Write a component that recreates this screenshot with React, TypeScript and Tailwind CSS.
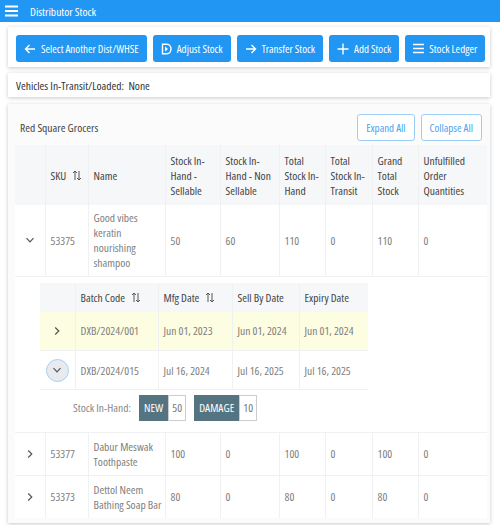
import React from "react";

const rows = [
  { sku: "53377", name: "Dabur Meswak Toothpaste", s: "100", ns: "0", tih: "100", tit: "0", g: "100", u: "0" },
  { sku: "53373", name: "Dettol Neem Bathing Soap Bar", s: "80", ns: "0", tih: "80", tit: "0", g: "80", u: "0" },
];

function SortIcon() {
  return (
    <svg width="10" height="11" viewBox="0 0 10 11" className="inline-block ml-[6px] -mt-[2px] text-[#555]">
      <path d="M3 10V1M1 3l2-2 2 2" stroke="currentColor" strokeWidth="1" fill="none" />
      <path d="M7 1v9M5 8l2 2 2-2" stroke="currentColor" strokeWidth="1" fill="none" />
    </svg>
  );
}

function Chevron({ dir }: { dir: "down" | "right" }) {
  return (
    <svg width="10" height="10" viewBox="0 0 10 10" className="text-[#555]">
      {dir === "down" ? (
        <path d="M1.5 3.2L5 6.8l3.5-3.6" stroke="currentColor" strokeWidth="1.2" fill="none" />
      ) : (
        <path d="M3.2 1.5L6.8 5 3.2 8.5" stroke="currentColor" strokeWidth="1.2" fill="none" />
      )}
    </svg>
  );
}

function Btn({ icon, label }: { icon: React.ReactNode; label: string }) {
  return (
    <button className="h-[27px] px-[8px] bg-[#2196f3] text-white rounded-[3px] flex items-center gap-[5px] text-[11px] whitespace-nowrap">
      {icon}
      {label}
    </button>
  );
}

const th = "px-[5px] py-[7px] text-left font-normal text-[#444] align-middle border-r border-[#eef0f2] last:border-r-0";
const td = "px-[5px] py-[5px] text-[#808080] align-middle border-r border-[#f0f1f3] last:border-r-0";

export default function App() {
  return (
    <div className="w-[500px] h-[525px] bg-white overflow-hidden font-['Open_Sans',sans-serif] font-stretch-condensed text-[11.5px] leading-[15px]">
      <div className="h-[22px] bg-[#2196f3] flex items-center pl-[5px] gap-[12px] text-white">
        <svg width="13" height="12" viewBox="0 0 13 12">
          <rect x="0" y="0.5" width="13" height="2" fill="white" />
          <rect x="0" y="5" width="13" height="2" fill="white" />
          <rect x="0" y="9.5" width="13" height="2" fill="white" />
        </svg>
        <span className="text-[11.5px]">Distributor Stock</span>
      </div>

      <div className="ml-2 mr-[10px] mt-[5px] bg-white shadow-[0_1px_4px_rgba(0,0,0,0.22)] px-[8px] pt-[8px] pb-[5px] flex gap-[6px]">
        <Btn
          label="Select Another Dist/WHSE"
          icon={
            <svg width="12" height="12" viewBox="0 0 12 12">
              <path d="M11 6H1.5M5.5 2L1.5 6l4 4" stroke="white" strokeWidth="1.4" fill="none" />
            </svg>
          }
        />
        <Btn
          label="Adjust Stock"
          icon={
            <svg width="11" height="12" viewBox="0 0 11 12">
              <path d="M1.5 1.2h4.5c2.3 0 4 2.1 4 4.8s-1.7 4.8-4 4.8H1.5z" stroke="white" strokeWidth="1.4" fill="none" />
              <path d="M4 3.6L7 6 4 8.4z" fill="white" />
            </svg>
          }
        />
        <Btn
          label="Transfer Stock"
          icon={
            <svg width="12" height="12" viewBox="0 0 12 12">
              <path d="M1 6h9.5M6.5 2l4 4-4 4" stroke="white" strokeWidth="1.4" fill="none" />
            </svg>
          }
        />
        <Btn
          label="Add Stock"
          icon={
            <svg width="12" height="12" viewBox="0 0 12 12">
              <path d="M6 0.5v11M0.5 6h11" stroke="white" strokeWidth="1.4" fill="none" />
            </svg>
          }
        />
        <Btn
          label="Stock Ledger"
          icon={
            <svg width="11" height="11" viewBox="0 0 11 11">
              <path d="M0 1.5h11M0 5.5h11M0 9.5h11" stroke="white" strokeWidth="1.4" fill="none" />
            </svg>
          }
        />
      </div>

      <div className="ml-2 mr-[10px] mt-[6px] h-[24px] bg-white shadow-[0_1px_4px_rgba(0,0,0,0.22)] px-[8px] flex items-center text-[#333]">
        Vehicles In-Transit/Loaded:&nbsp; None
      </div>

      <div className="ml-2 mr-[10px] mt-[7px] bg-[#fbfbfc] shadow-[0_1px_4px_rgba(0,0,0,0.22)] pl-[7px] pr-[3px] pt-[10px] pb-[5px]">
        <div className="flex items-center justify-between pl-[5px] pr-[5px] h-[27px]">
          <span className="text-[#444]">Red Square Grocers</span>
          <div className="flex gap-[6px]">
            <button className="h-[27px] px-[8px] border border-[#9ecdf5] rounded-[3px] text-[#4aa3ef] bg-white text-[11px]">Expand All</button>
            <button className="h-[27px] px-[8px] border border-[#9ecdf5] rounded-[3px] text-[#4aa3ef] bg-white text-[11px]">Collapse All</button>
          </div>
        </div>

        <table className="mt-[4px] w-[472px] table-fixed border-collapse">
          <colgroup>
            <col className="w-[30px]" />
            <col className="w-[43px]" />
            <col className="w-[77px]" />
            <col className="w-[55px]" />
            <col className="w-[59px]" />
            <col className="w-[46px]" />
            <col className="w-[47px]" />
            <col className="w-[46px]" />
            <col className="w-[69px]" />
          </colgroup>
          <thead>
            <tr className="bg-[#f6f7f9] h-[60px]">
              <th className={th}></th>
              <th className={th + " whitespace-nowrap"}>
                SKU
                <SortIcon />
              </th>
              <th className={th}>Name</th>
              <th className={th}>Stock In-Hand - Sellable</th>
              <th className={th}>Stock In-Hand - Non Sellable</th>
              <th className={th}>Total Stock In-Hand</th>
              <th className={th}>Total Stock In-Transit</th>
              <th className={th}>Grand Total Stock</th>
              <th className={th}>Unfulfilled Order Quantities</th>
            </tr>
          </thead>
          <tbody className="bg-white">
            <tr className="h-[71px] border-b border-[#f0f1f3]">
              <td className={td}>
                <div className="flex justify-center">
                  <Chevron dir="down" />
                </div>
              </td>
              <td className={td}>53375</td>
              <td className={td + " pr-0"}>Good vibes keratin nourishing shampoo</td>
              <td className={td}>50</td>
              <td className={td}>60</td>
              <td className={td}>110</td>
              <td className={td}>0</td>
              <td className={td}>110</td>
              <td className={td}>0</td>
            </tr>
            <tr className="border-b border-[#f0f1f3]">
              <td colSpan={9} className="pl-[25px] pt-[6px] pb-[6px]">
                <table className="w-[328px] table-fixed border-collapse">
                  <colgroup>
                    <col className="w-[35px]" />
                    <col className="w-[83px]" />
                    <col className="w-[74px]" />
                    <col className="w-[67px]" />
                    <col className="w-[69px]" />
                  </colgroup>
                  <thead>
                    <tr className="bg-[#f6f7f9] h-[28px]">
                      <th className={th}></th>
                      <th className={th + " whitespace-nowrap"}>
                        Batch Code
                        <SortIcon />
                      </th>
                      <th className={th + " whitespace-nowrap"}>
                        Mfg Date
                        <SortIcon />
                      </th>
                      <th className={th + " whitespace-nowrap"}>Sell By Date</th>
                      <th className={th + " whitespace-nowrap"}>Expiry Date</th>
                    </tr>
                  </thead>
                  <tbody>
                    <tr className="h-[39px] bg-[#fdfde1] border-b border-[#f0f1f3]">
                      <td className={td}>
                        <div className="flex justify-center">
                          <Chevron dir="right" />
                        </div>
                      </td>
                      <td className={td + " whitespace-nowrap"}>DXB/2024/001</td>
                      <td className={td + " whitespace-nowrap"}>Jun 01, 2023</td>
                      <td className={td + " whitespace-nowrap"}>Jun 01, 2024</td>
                      <td className={td + " whitespace-nowrap"}>Jun 01, 2024</td>
                    </tr>
                    <tr className="h-[39px] bg-white border-b border-[#f0f1f3]">
                      <td className={td}>
                        <div className="flex justify-center">
                          <span className="w-[23px] h-[23px] rounded-full bg-[#e8eaed] border-[1.5px] border-[#a8d0f5] flex items-center justify-center">
                            <Chevron dir="down" />
                          </span>
                        </div>
                      </td>
                      <td className={td + " whitespace-nowrap"}>DXB/2024/015</td>
                      <td className={td + " whitespace-nowrap"}>Jul 16, 2024</td>
                      <td className={td + " whitespace-nowrap"}>Jul 16, 2025</td>
                      <td className={td + " whitespace-nowrap"}>Jul 16, 2025</td>
                    </tr>
                    <tr className="h-[36px] bg-white">
                      <td colSpan={5} className="pl-[33px]">
                        <div className="flex items-center">
                          <span className="text-[#888] mr-[8px]">Stock In-Hand:</span>
                          <span className="h-[26px] px-[5px] bg-[#557482] text-white flex items-center">NEW</span>
                          <span className="h-[26px] w-[18px] border border-[#ccc] text-[#777] flex items-center justify-center">50</span>
                          <span className="ml-[8px] h-[26px] px-[5px] bg-[#557482] text-white flex items-center">DAMAGE</span>
                          <span className="h-[26px] w-[18px] border border-[#ccc] text-[#777] flex items-center justify-center">10</span>
                        </div>
                      </td>
                    </tr>
                  </tbody>
                </table>
              </td>
            </tr>
            {rows.map((r) => (
              <tr key={r.sku} className="h-[43px] border-b border-[#f0f1f3] last:border-b-0">
                <td className={td}>
                  <div className="flex justify-center">
                    <Chevron dir="right" />
                  </div>
                </td>
                <td className={td}>{r.sku}</td>
                <td className={td + " pr-0"}>{r.name}</td>
                <td className={td}>{r.s}</td>
                <td className={td}>{r.ns}</td>
                <td className={td}>{r.tih}</td>
                <td className={td}>{r.tit}</td>
                <td className={td}>{r.g}</td>
                <td className={td}>{r.u}</td>
              </tr>
            ))}
          </tbody>
        </table>
      </div>
    </div>
  );
}
